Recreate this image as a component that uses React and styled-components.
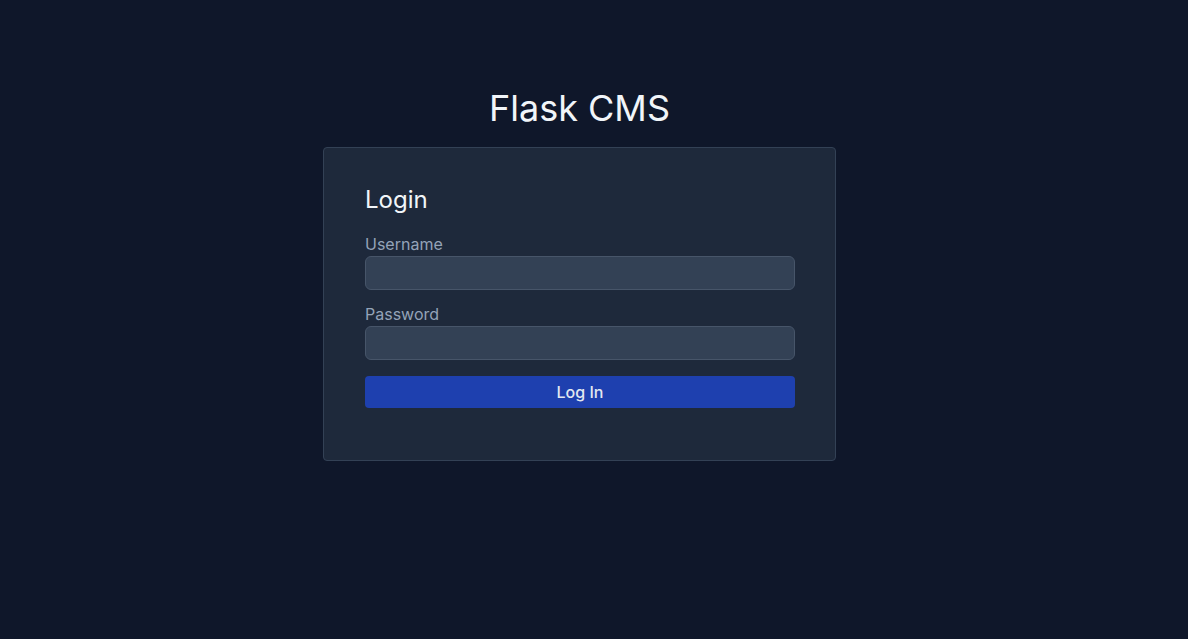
import React from 'react';
import styled, { createGlobalStyle } from 'styled-components';

const GlobalStyle = createGlobalStyle`
  html, body {
    margin: 0;
    padding: 0;
    background: #0f172a;
    font-family: Inter, "Noto Sans", sans-serif;
    color: #e2e8f0;
  }
  * { box-sizing: border-box; }
`;

const Page = styled.main`
  min-height: 639px;
  padding: 88px 29px 0 0;
  display: flex;
  flex-direction: column;
  align-items: center;
`;

const Title = styled.h1`
  margin: 0 0 19px;
  font-size: 36px;
  line-height: 40px;
  font-weight: 400;
  color: #f1f5f9;
`;

const Card = styled.section`
  width: 513px;
  padding: 40px 40px 40px 41px;
  background: #1e293b;
  border: 1px solid #334155;
  border-radius: 4px;
`;

const Heading = styled.h2`
  margin: 0 0 20px;
  font-size: 24px;
  line-height: 24px;
  font-weight: 400;
  color: #f1f5f9;
`;

const Form = styled.form`
  display: flex;
  flex-direction: column;
`;

const Field = styled.div`
  display: flex;
  flex-direction: column;
  margin-bottom: ${p => p.$gap}px;
`;

const Label = styled.label`
  font-size: 16px;
  line-height: 24px;
  color: #94a3b8;
`;

const Input = styled.input`
  height: 34px;
  width: 100%;
  padding: 0 12px;
  background: #334155;
  border: 1px solid #475569;
  border-radius: 6px;
  color: #f1f5f9;
  font: inherit;
  outline: none;
`;

const Button = styled.button`
  height: 32px;
  width: 100%;
  margin-bottom: 12px;
  background: #1e40af;
  border: none;
  border-radius: 4px;
  color: #e2e8f0;
  font-family: Inter, "Noto Sans", sans-serif;
  font-size: 16px;
  font-weight: 500;
  cursor: pointer;
`;

export default function App() {
  return (
    <>
      <GlobalStyle />
      <Page>
        <Title>Flask CMS</Title>
        <Card>
          <Heading>Login</Heading>
          <Form onSubmit={e => e.preventDefault()}>
            <Field $gap={12}>
              <Label htmlFor="username">Username</Label>
              <Input id="username" type="text" />
            </Field>
            <Field $gap={16}>
              <Label htmlFor="password">Password</Label>
              <Input id="password" type="password" />
            </Field>
            <Button type="submit">Log In</Button>
          </Form>
        </Card>
      </Page>
    </>
  );
}
